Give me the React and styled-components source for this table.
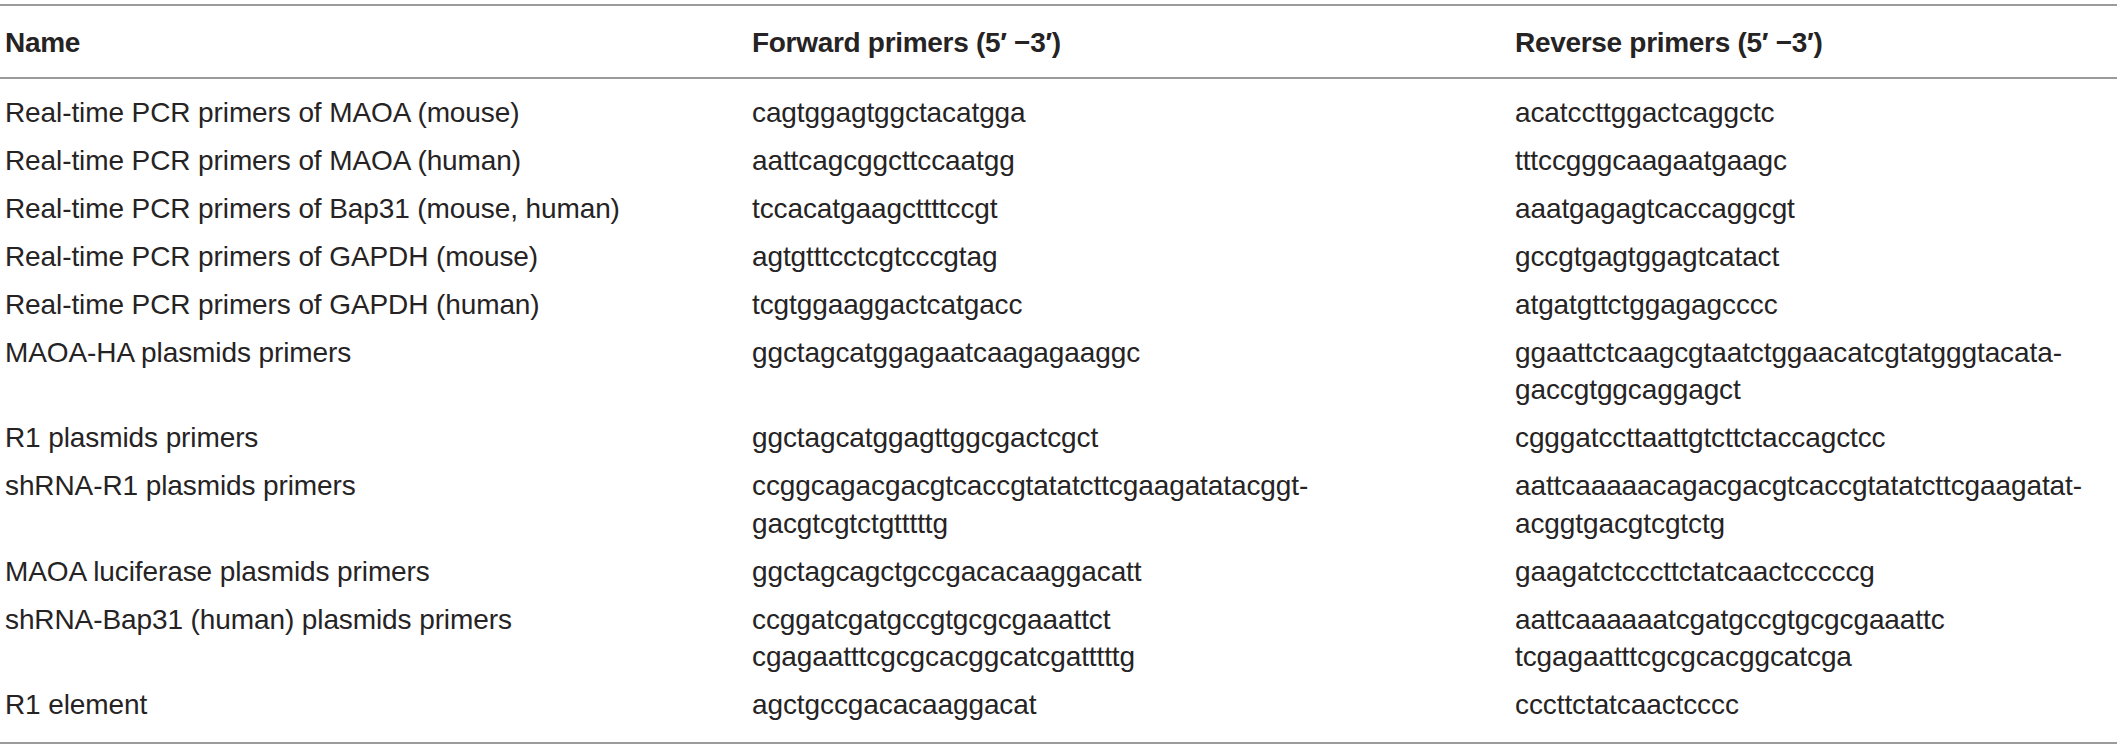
import styled, { createGlobalStyle } from "styled-components";

const GlobalStyle = createGlobalStyle`
  html, body {
    margin: 0;
    padding: 0;
    background: #ffffff;
  }
  body {
    font-family: "Liberation Sans", Arial, Helvetica, sans-serif;
    color: #262324;
  }
`;

const Table = styled.div`
  width: 2117px;
  margin-top: 4px;
  border-top: 2px solid #9b9b9b;
  border-bottom: 2px solid #9b9b9b;
`;

const Row = styled.div`
  display: grid;
  grid-template-columns: 747px 763px 1fr;
  padding: ${(p) => (p.$head ? "18px 0 15px" : "5px 0 5.5px")};
  border-bottom: ${(p) => (p.$head ? "2px solid #9b9b9b" : "none")};
`;

const Body = styled.div`
  padding: 10px 0 13px;
`;

const Cell = styled.div`
  padding-left: 5px;
  font-size: 28px;
  line-height: 37.5px;
  font-weight: ${(p) => (p.$head ? 700 : 400)};
  letter-spacing: ${(p) => (p.$head ? "-0.3px" : "-0.1px")};
  white-space: pre-line;
`;

const rows = [
  ["Real-time PCR primers of MAOA (mouse)", "cagtggagtggctacatgga", "acatccttggactcaggctc"],
  ["Real-time PCR primers of MAOA (human)", "aattcagcggcttccaatgg", "tttccgggcaagaatgaagc"],
  ["Real-time PCR primers of Bap31 (mouse, human)", "tccacatgaagcttttccgt", "aaatgagagtcaccaggcgt"],
  ["Real-time PCR primers of GAPDH (mouse)", "agtgtttcctcgtcccgtag", "gccgtgagtggagtcatact"],
  ["Real-time PCR primers of GAPDH (human)", "tcgtggaaggactcatgacc", "atgatgttctggagagcccc"],
  [
    "MAOA-HA plasmids primers",
    "ggctagcatggagaatcaagagaaggc",
    "ggaattctcaagcgtaatctggaacatcgtatgggtacata-\ngaccgtggcaggagct",
  ],
  ["R1 plasmids primers", "ggctagcatggagttggcgactcgct", "cgggatccttaattgtcttctaccagctcc"],
  [
    "shRNA-R1 plasmids primers",
    "ccggcagacgacgtcaccgtatatcttcgaagatatacggt-\ngacgtcgtctgtttttg",
    "aattcaaaaacagacgacgtcaccgtatatcttcgaagatat-\nacggtgacgtcgtctg",
  ],
  ["MAOA luciferase plasmids primers", "ggctagcagctgccgacacaaggacatt", "gaagatctcccttctatcaactcccccg"],
  [
    "shRNA-Bap31 (human) plasmids primers",
    "ccggatcgatgccgtgcgcgaaattct\ncgagaatttcgcgcacggcatcgatttttg",
    "aattcaaaaaatcgatgccgtgcgcgaaattc\ntcgagaatttcgcgcacggcatcga",
  ],
  ["R1 element", "agctgccgacacaaggacat", "cccttctatcaactcccc"],
];

export default function App() {
  return (
    <>
      <GlobalStyle />
      <Table>
        <Row $head>
          <Cell $head>Name</Cell>
          <Cell $head>Forward primers (5′ −3′)</Cell>
          <Cell $head>Reverse primers (5′ −3′)</Cell>
        </Row>
        <Body>
          {rows.map((r) => (
            <Row key={r[0]}>
              <Cell>{r[0]}</Cell>
              <Cell>{r[1]}</Cell>
              <Cell>{r[2]}</Cell>
            </Row>
          ))}
        </Body>
      </Table>
    </>
  );
}
